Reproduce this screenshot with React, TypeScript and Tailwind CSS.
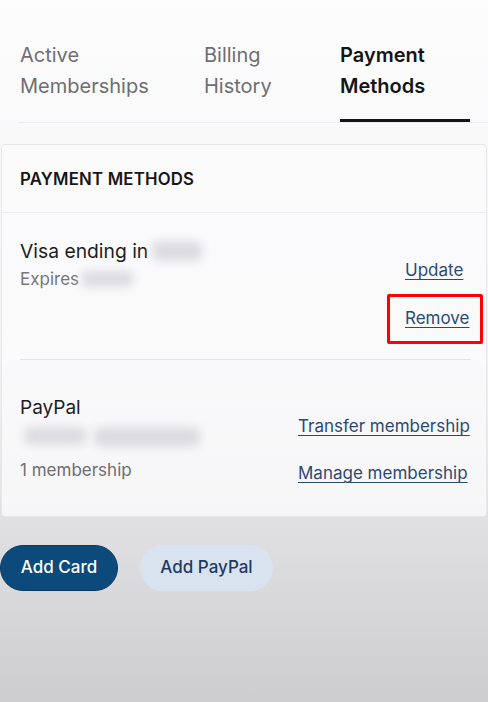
import React from 'react';

const tabs = [
  { label: ['Active', 'Memberships'], active: false, w: 'w-[184px]' },
  { label: ['Billing', 'History'], active: false, w: 'w-[136px]' },
  { label: ['Payment', 'Methods'], active: true, w: 'w-[132px]' },
];

// lien souligné bleu
const Link: React.FC<{ children: React.ReactNode }> = ({ children }) => (
  <span className="text-[17px] text-[#2b4a72] underline underline-offset-[3px] decoration-[1px] leading-[22px] whitespace-nowrap">
    {children}
  </span>
);

const Blur: React.FC<{ className: string }> = ({ className }) => (
  <div className={`bg-[#dcdce0] blur-[5px] rounded-md ${className}`} />
);

export default function App() {
  return (
    <div
      className="w-[488px] h-[702px] overflow-hidden bg-gradient-to-b from-[#fdfdfe] via-[#f3f3f5] to-[#cdcdcf]"
      style={{ fontFamily: 'Inter, "Open Sans", sans-serif' }}
    >
      {/* Onglets */}
      <div className="pt-[40px] ml-[18px] flex border-b border-[#ececef] w-[470px]">
        {tabs.map((t) => (
          <div key={t.label[0]} className={`${t.w} pl-[2px]`}>
            <div
              className={`text-[20px] leading-[31px] pb-[17px] ${
                t.active ? 'font-semibold text-[#151515] border-b-[3px] border-[#161616]' : 'text-[#6e6e72] border-b-[3px] border-transparent'
              }`}
            >
              {t.label[0]}
              <br />
              {t.label[1]}
            </div>
          </div>
        ))}
      </div>

      {/* Carte */}
      <div className="mt-[21px] ml-[1px] w-[486px] border border-[#e7e7ea] rounded-[4px] bg-[#fbfbfd]/80">
        <div className="h-[68px] flex items-center pl-[18px] pt-[3px] border-b border-[#ececef]">
          <span className="text-[16.8px] font-semibold tracking-[0.2px] text-[#161616]">PAYMENT METHODS</span>
        </div>

        <div className="pl-[18px] pr-[15px]">
          {/* Visa */}
          <div className="h-[147px] flex justify-between border-b border-[#e4e4e7]">
            <div className="pt-[25px]">
              <div className="flex items-center">
                <span className="text-[19.3px] leading-[26px] text-[#1d1d1f]">Visa ending in</span>
                <Blur className="ml-[4px] w-[50px] h-[20px]" />
              </div>
              <div className="flex items-center mt-[4px]">
                <span className="text-[17px] leading-[22px] text-[#77777b]">Expires</span>
                <Blur className="ml-[2px] w-[52px] h-[16px]" />
              </div>
            </div>
            <div className="w-[66px] flex flex-col items-start pt-[46px] gap-[25px]">
              <Link>Update</Link>
              <span className="relative">
                <Link>Remove</Link>
                <span className="absolute left-[-18px] right-[-13px] top-[-12px] bottom-[-14px] border-[3px] border-[#ff0000] rounded-[2px]" />
              </span>
            </div>
          </div>

          {/* PayPal */}
          <div className="h-[156px] flex justify-between">
            <div className="pt-[35px]">
              <div className="text-[19px] leading-[26px] text-[#1d1d1f]">PayPal</div>
              <div className="flex gap-[8px] mt-[6px] ml-[4px]">
                <Blur className="w-[62px] h-[18px]" />
                <Blur className="w-[106px] h-[20px]" />
              </div>
              <div className="text-[17px] leading-[22px] text-[#6e6e72] mt-[12px]">1 membership</div>
            </div>
            <div className="w-[173px] flex flex-col items-start pt-[55px] gap-[25px]">
              <Link>Transfer membership</Link>
              <Link>Manage membership</Link>
            </div>
          </div>
        </div>
      </div>

      {/* Boutons */}
      <div className="mt-[28px] flex gap-[22px]">
        <button className="h-[46px] w-[118px] rounded-full bg-[#0c4a7c] text-white text-[17px] font-medium border border-[#083a63]">
          Add Card
        </button>
        <button className="h-[46px] w-[133px] rounded-full bg-[#d9e3ef] text-[#1c3a64] text-[17px] font-medium">
          Add PayPal
        </button>
      </div>
    </div>
  );
}
